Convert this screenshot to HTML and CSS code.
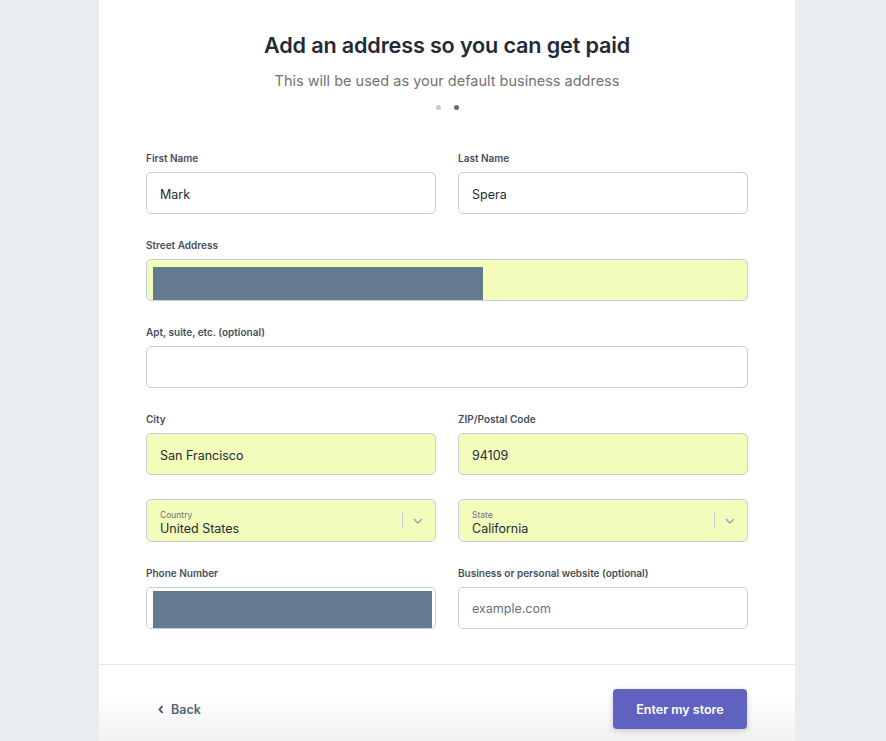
FILE: index.html
```html
<!DOCTYPE html>
<html>
<head>
<meta charset="utf-8">
<link rel="stylesheet" href="styles.css">
</head>
<body>
<div class="card">
  <div class="header">
    <h1 class="title">Add an address so you can get paid</h1>
    <p class="subtitle">This will be used as your default business address</p>
    <div class="dots"><span class="dot"></span><span class="dot dot-active"></span></div>
  </div>
  <form class="form">
    <div class="field">
      <label class="label">First Name</label>
      <div class="input"><span class="value">Mark</span></div>
    </div>
    <div class="field">
      <label class="label">Last Name</label>
      <div class="input"><span class="value">Spera</span></div>
    </div>
    <div class="field field-wide">
      <label class="label">Street Address</label>
      <div class="input input-fill input-redacted"><span class="redact redact-street"></span></div>
    </div>
    <div class="field field-wide">
      <label class="label">Apt, suite, etc. (optional)</label>
      <div class="input"></div>
    </div>
    <div class="field">
      <label class="label">City</label>
      <div class="input input-fill"><span class="value">San Francisco</span></div>
    </div>
    <div class="field">
      <label class="label">ZIP/Postal Code</label>
      <div class="input input-fill"><span class="value">94109</span></div>
    </div>
    <div class="field">
      <div class="select input-fill">
        <div class="select-text">
          <span class="select-label">Country</span>
          <span class="select-value">United States</span>
        </div>
        <span class="select-divider"></span>
        <svg class="chevron" width="10" height="6" viewBox="0 0 10 6"><path d="M1 1l4 4 4-4" fill="none" stroke="#919eab" stroke-width="1.3"/></svg>
      </div>
    </div>
    <div class="field">
      <div class="select input-fill">
        <div class="select-text">
          <span class="select-label">State</span>
          <span class="select-value">California</span>
        </div>
        <span class="select-divider"></span>
        <svg class="chevron" width="10" height="6" viewBox="0 0 10 6"><path d="M1 1l4 4 4-4" fill="none" stroke="#919eab" stroke-width="1.3"/></svg>
      </div>
    </div>
    <div class="field">
      <label class="label">Phone Number</label>
      <div class="input input-redacted"><span class="redact redact-phone"></span></div>
    </div>
    <div class="field">
      <label class="label">Business or personal website (optional)</label>
      <div class="input"><span class="placeholder">example.com</span></div>
    </div>
  </form>
  <div class="footer">
    <a class="back"><svg width="6" height="9" viewBox="0 0 6 9"><path d="M4.5 1L1.5 4.5 4.5 8" fill="none" stroke="#454f5b" stroke-width="1.8"/></svg><span>Back</span></a>
    <button class="primary" type="button">Enter my store</button>
  </div>
</div>
</body>
</html>
```

FILE: styles.css
```css
html, body {
  margin: 0;
  padding: 0;
  background: #e9edf0;
  height: 100%;
  overflow: hidden;
}
body {
  font-family: Inter, "Noto Sans", sans-serif;
  color: #212b36;
}
.card {
  width: 696px;
  margin-left: 99px;
  background: #fff;
  min-height: 741px;
  box-sizing: border-box;
  padding-top: 31px;
  display: flex;
  flex-direction: column;
}
.header {
  text-align: center;
}
.title {
  margin: 0;
  font-size: 21.6px;
  line-height: 28px;
  font-weight: 600;
  color: #212b36;
  letter-spacing: -0.15px;
}
.subtitle {
  margin: 12px 0 0;
  font-size: 14.5px;
  line-height: 20px;
  color: #737373;
}
.dots {
  margin-top: 14px;
  display: flex;
  justify-content: center;
  gap: 13px;
}
.dot {
  width: 5px;
  height: 5px;
  border-radius: 50%;
  background: #c9c9c9;
}
.dot-active {
  background: #6b6b6b;
}
.form {
  margin: 41px 47px 0;
  display: grid;
  grid-template-columns: 290px 290px;
  column-gap: 22px;
  row-gap: 24px;
}
.field {
  display: flex;
  flex-direction: column;
}
.field-wide {
  grid-column: 1 / 3;
}
.label {
  font-size: 10px;
  line-height: 14px;
  font-weight: 600;
  color: #454f5b;
  margin-bottom: 7px;
}
.input {
  height: 42px;
  box-sizing: border-box;
  border: 1px solid #c4cdd5;
  border-radius: 5px;
  display: flex;
  align-items: center;
  padding: 0 13px;
  background: #fff;
}
.input-fill {
  background: #f3fcbb;
}
.value {
  font-size: 12.5px;
  color: #212b36;
  padding-top: 2px;
}
.placeholder {
  font-size: 12.5px;
  color: #637381;
}
.input-redacted {
  padding: 0 0 0 6px;
  align-items: flex-end;
}
.redact {
  display: block;
  background: #647a8f;
}
.redact-street {
  width: 330px;
  height: 33px;
}
.redact-phone {
  width: 279px;
  height: 37px;
}
.select {
  height: 43px;
  box-sizing: border-box;
  border: 1px solid #c4cdd5;
  border-radius: 5px;
  display: flex;
  align-items: center;
  padding: 0 12px 0 13px;
}
.select-text {
  flex: 1;
  display: flex;
  flex-direction: column;
  padding-top: 5px;
}
.select-label {
  font-size: 8.5px;
  line-height: 11px;
  color: #637381;
}
.select-value {
  font-size: 12.5px;
  line-height: 16px;
  color: #212b36;
}
.select-divider {
  width: 1px;
  height: 16px;
  background: #c4cdd5;
  margin-right: 10px;
}
.chevron {
  display: block;
}
.footer {
  margin-top: 35px;
  border-top: 1px solid #e4e5e7;
  flex: 1;
  display: flex;
  justify-content: space-between;
  align-items: flex-start;
  padding: 24px 48px 0 59px;
  background: linear-gradient(#fff 40%, #f1f1f1 100%);
}
.back {
  display: flex;
  align-items: center;
  gap: 7px;
  font-size: 12.5px;
  font-weight: 600;
  color: #50657a;
  height: 40px;
}
.primary {
  width: 134px;
  height: 40px;
  border: none;
  border-radius: 4px;
  background: #5f63bf;
  color: #fff;
  font-family: Inter, "Noto Sans", sans-serif;
  font-size: 12.5px;
  font-weight: 600;
  box-shadow: 0 2px 6px rgba(0, 0, 0, 0.18);
}
```
